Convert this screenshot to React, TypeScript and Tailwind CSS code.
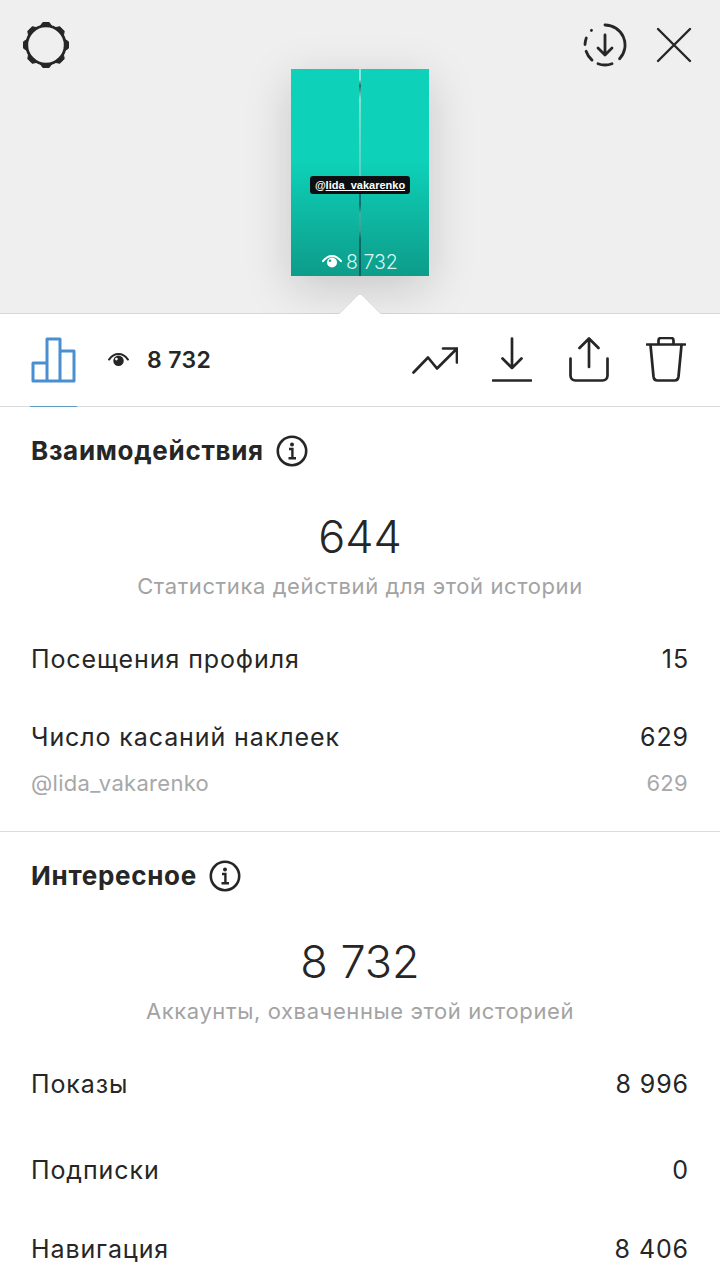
const font = "font-['Inter','Noto_Sans',sans-serif]";

function Row({ label, value, className }: { label: string; value: string; className: string }) {
  return (
    <div className={`flex justify-between items-center pl-[31px] pr-[31px] text-[25px] leading-[30px] tracking-[0.9px] text-[#262626] ${className}`}>
      <span>{label}</span>
      <span>{value}</span>
    </div>
  );
}

function Info() {
  return (
    <svg width="32" height="32" viewBox="0 0 32 32" fill="none" stroke="#262626" strokeWidth="2.6">
      <circle cx="16" cy="16" r="14.2" />
      <circle cx="16" cy="9.5" r="2" fill="#262626" stroke="none" />
      <path d="M13 14h3.4v9M12.500 23.200h7.500" strokeWidth="2.4" />
    </svg>
  );
}

function Eye({ size, color, glint }: { size: number; color: string; glint: string }) {
  return (
    <svg width={size} height={size * 0.7} viewBox="0 0 20 14" fill="none">
      <path d="M1 6.200C3.500 2.800 6.600 1 10 1s6.500 1.800 9 5.200" stroke={color} strokeWidth="2" strokeLinecap="round" />
      <circle cx="10" cy="7.500" r="5" fill={color} />
      <circle cx="8" cy="5.800" r="1.300" fill={glint} />
    </svg>
  );
}

function Section({ title, big, caption }: { title: string; big: string; caption: string }) {
  return (
    <>
      <div className="flex items-center gap-[12px] pl-[31px] h-[34px]">
        <span className="text-[26px] leading-[34px] font-bold tracking-[0.7px] text-[#262626]">{title}</span>
        <Info />
      </div>
      <div className="mt-[42px] text-center text-[45px] leading-[54px] font-light text-[#262626]">{big}</div>
      <div className="mt-[8px] text-center text-[22px] leading-[28px] tracking-[0.6px] text-[#a3a3a3]">{caption}</div>
    </>
  );
}

const knobs = [0, 45, 90, 135, 180, 225, 270, 315];

export default function App() {
  return (
    <div className={`w-[720px] h-[1280px] overflow-hidden bg-white ${font}`}>
      <div className="relative h-[314px] bg-[#efefef] border-b border-[#d8d8d8]">
        <div className="flex justify-between items-start pl-[22px] pr-[28px] pt-[21px] h-[69px]">
          <svg width="48" height="48" viewBox="0 0 48 48" fill="none">
            <circle cx="24" cy="24" r="19.200" stroke="#262626" strokeWidth="2.800" />
            {knobs.map((a) => (
              <path
                key={a}
                d="M18 5.500L20.800 1.500h6.400L30 5.500z"
                fill="#262626"
                stroke="#262626"
                strokeWidth="1"
                strokeLinejoin="round"
                transform={`rotate(${a} 24 24)`}
              />
            ))}
          </svg>
          <div className="flex items-center gap-[29px] h-[48px]">
            <svg width="44" height="44" viewBox="0 0 44 44" fill="none" stroke="#262626" strokeWidth="2.800" strokeLinecap="round" strokeLinejoin="round">
              <path d="M22 2A20 20 0 0 1 36.600 35.700" />
              <path d="M15 40.700A20 20 0 0 0 29 40.700" />
              <path d="M3.100 28.300A20 20 0 0 0 9 37.100" />
              <path d="M3.300 15A20 20 0 0 0 2 21.500" />
              <path d="M8.400 7.400l0.100-0.100" />
              <path d="M22 12v20M15 25l7 7 7-7" />
            </svg>
            <svg width="36" height="36" viewBox="0 0 36 36" fill="none" stroke="#262626" strokeWidth="2.400" strokeLinecap="round">
              <path d="M2 2l32 32M34 2L2 34" />
            </svg>
          </div>
        </div>
        <div className="relative mx-auto w-[138px] h-[207px] bg-gradient-to-b from-[#0dd1b8] from-45% to-[#0d9c8a] shadow-[0_12px_44px_rgba(0,0,0,0.17)]">
          <div className="absolute left-[68px] top-0 bottom-0 w-[2px] bg-[linear-gradient(to_bottom,#7ee8e0_0%,#7ee8e0_5%,#1f6f68_8%,#7ee0d0_14%,#4fd0c0_55%,#0f6f70_56%,#0f6f70_66%,#3fb0a0_70%,#3f9f98_78%,#0a6a68_82%,#0a5f60_100%)]" />
          <div className="absolute left-[19px] top-[107px] w-[100px] h-[18px] rounded-[3px] bg-[#0c0f12] flex items-center justify-center text-[11px] font-bold text-white font-['Liberation_Sans',sans-serif]">
            @<span className="underline">lida_vakarenko</span>
          </div>
          <div className="absolute left-[31px] top-[181px] flex items-center gap-[4px] text-[19.500px] leading-[24px] font-light text-[#d6f5ef]">
            <Eye size={20} color="#ffffff" glint="#10a898" />
            <span>8 732</span>
          </div>
        </div>
        <div className="absolute left-[343px] top-[299px] w-[34px] h-[34px] rotate-45 rounded-[5px] bg-white border-l border-t border-[#d8d8d8]" />
      </div>
      <div className="relative bg-white flex items-center h-[93px] border-b border-[#dbdbdb]">
        <div className="w-[77px] pl-[31px] shrink-0">
          <svg width="46" height="46" viewBox="0 0 46 46" fill="none" stroke="#4a90d0" strokeWidth="3" strokeLinejoin="round">
            <path d="M2 44V26h14v18zM16 44V2h13v42zM29 44V14h14v30z" />
          </svg>
        </div>
        <div className="absolute left-[30px] bottom-[-1px] w-[47px] h-[1px] bg-[#5f9bc0]" />
        <div className="ml-[31px]"><Eye size={21} color="#262626" glint="#ffffff" /></div>
        <span className="ml-[18px] mt-px text-[23px] font-semibold tracking-[0.4px] text-[#262626]">8 732</span>
        <div className="ml-auto flex items-center pr-[34px]">
          <svg width="46" height="30" viewBox="0 0 46 30" fill="none" stroke="#262626" strokeWidth="2.700" strokeLinecap="round" strokeLinejoin="round" className="mr-[34px]">
            <path d="M1.500 27.500l14.500-15 9 11L45 3.500M31 3.500h14v14" />
          </svg>
          <svg width="40" height="46" viewBox="0 0 40 46" fill="none" stroke="#262626" strokeWidth="2.700" strokeLinecap="round" strokeLinejoin="round" className="mr-[37px]">
            <path d="M20 1.500V31M10.500 21.500l9.500 9.500 9.500-9.500" />
            <path d="M1 43.500h38" />
          </svg>
          <svg width="40" height="46" viewBox="0 0 40 46" fill="none" stroke="#262626" strokeWidth="2.700" strokeLinecap="round" strokeLinejoin="round" className="mr-[37px]">
            <path d="M20 30V1.500M10.500 11L20 1.500l9.500 9.500" />
            <path d="M1.500 21.500v17c0 3 2 5 5 5h27c3 0 5-2 5-5v-17" />
          </svg>
          <svg width="40" height="46" viewBox="0 0 40 46" fill="none" stroke="#262626" strokeWidth="2.700" strokeLinecap="round" strokeLinejoin="round">
            <path d="M1 7.500h38" />
            <path d="M12.500 7V3.500C12.500 2 13.500 1 15 1h10c1.500 0 2.500 1 2.500 2.500V7" />
            <path d="M4.500 8l3 31.500c.3 2.500 1.500 4 4 4h17c2.500 0 3.700-1.500 4-4l3-31.500" />
          </svg>
        </div>
      </div>
      <div className="pt-[27px]">
        <Section title="Взаимодействия" big="644" caption="Статистика действий для этой истории" />
        <Row label="Посещения профиля" value="15" className="mt-[44px]" />
        <Row label="Число касаний наклеек" value="629" className="mt-[48px]" />
        <div className="mt-[17px] flex justify-between pl-[31px] pr-[32px] text-[22px] leading-[28px] tracking-[0.3px] text-[#a8a8a8]">
          <span>@lida_vakarenko</span>
          <span>629</span>
        </div>
        <div className="mt-[34px] h-[1px] bg-[#dbdbdb]" />
      </div>
      <div className="pt-[27px]">
        <Section title="Интересное" big="8 732" caption="Аккаунты, охваченные этой историей" />
        <Row label="Показы" value="8 996" className="mt-[44px]" />
        <Row label="Подписки" value="0" className="mt-[56px]" />
        <Row label="Навигация" value="8 406" className="mt-[49px]" />
      </div>
    </div>
  );
}
